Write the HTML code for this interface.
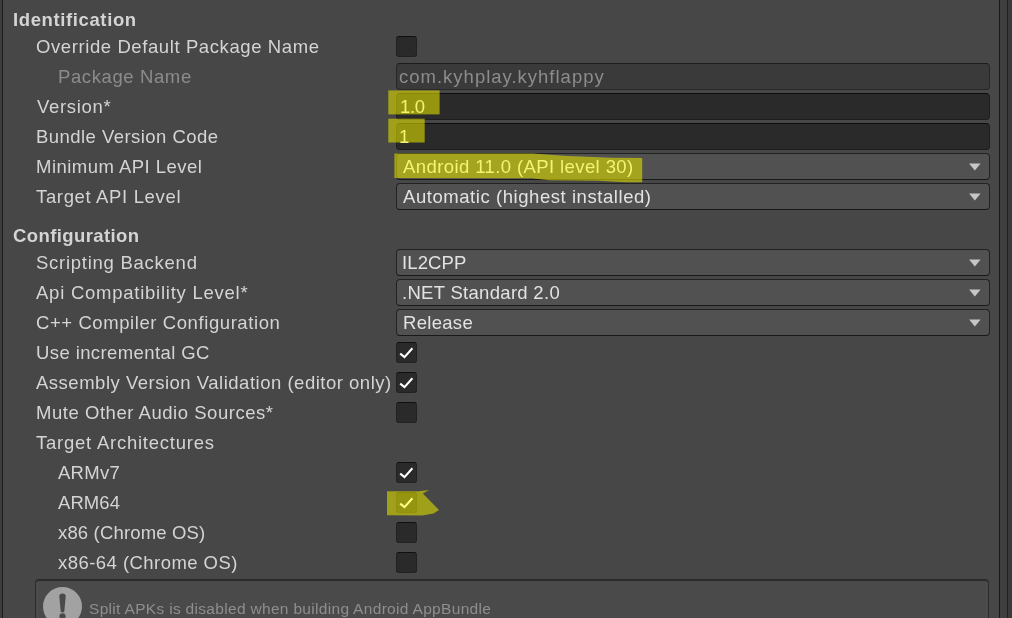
<!DOCTYPE html><html><head><meta charset="utf-8"><title>Player Settings</title><style>
html,body{margin:0;padding:0;}
body{width:1012px;height:618px;overflow:hidden;background:#474747;position:relative;font-family:"Liberation Sans",sans-serif;font-size:18.5px;color:#d4d4d4;}
.t{position:absolute;white-space:nowrap;line-height:30px;height:30px;z-index:3;will-change:transform;}
.b{font-weight:bold;}
.d{color:#8c8c8c;}
.y{color:#f3f374;}
.w{color:#e2e2e2;}
.edgeL{position:absolute;left:0;top:0;width:1.6px;height:618px;background:#3c3c3c;}
.lineL{position:absolute;left:1.5px;top:0;width:1.5px;height:618px;background:#1c1c1c;}
.lineR{position:absolute;left:999.2px;top:0;width:1.1px;height:618px;background:#1a1a1a;}
.sb{position:absolute;left:1000.3px;top:0;width:7px;height:618px;background:#3f3f3f;}
.lineR2{position:absolute;left:1007.3px;top:0;width:1.1px;height:618px;background:#202020;}
.edgeR{position:absolute;left:1008.3px;top:0;width:4px;height:618px;background:#3a3a3a;}
.tf{position:absolute;left:396px;width:594px;height:27px;box-sizing:border-box;border-radius:4px;background:#2a2a2a;border:1.5px solid #1e1e1e;border-top-color:#0c0c0c;z-index:1;}
.tf.dis{background:#3a3a3a;border-color:#272727;border-top-color:#1c1c1c;}
.dd{position:absolute;left:396px;width:594px;height:27px;box-sizing:border-box;border-radius:4px;background:#515151;border:1.4px solid #222;border-bottom-color:#191919;z-index:1;}
.cb{position:absolute;left:396px;width:21px;height:21px;box-sizing:border-box;border-radius:3px;background:#2a2a2a;border:1.5px solid #212121;border-top-color:#0f0f0f;z-index:1;}
.hl{position:absolute;left:0;top:0;z-index:2;}
.ck{position:absolute;z-index:3;left:396px;width:21px;height:21px;}
.help{position:absolute;left:34.5px;top:579px;width:954.5px;height:60px;box-sizing:border-box;border:1.4px solid #2b2b2b;border-top-width:2px;border-radius:4px;background:#4a4a4a;z-index:1;}
.ht{position:absolute;white-space:nowrap;font-size:15.5px;color:#8e8e8e;line-height:20px;z-index:3;will-change:transform;}
</style></head><body>
<div class="edgeL"></div><div class="lineL"></div><div class="lineR"></div><div class="sb"></div><div class="lineR2"></div><div class="edgeR"></div>
<div class="tf dis" style="top:63px"></div>
<div class="tf" style="top:93px"></div>
<div class="tf" style="top:123px"></div>
<div class="dd" style="top:153px"></div>
<div class="dd" style="top:183px"></div>
<div class="dd" style="top:249px"></div>
<div class="dd" style="top:279px"></div>
<div class="dd" style="top:309px"></div>
<div class="cb" style="top:36px"></div>
<div class="cb" style="top:342px"></div>
<svg class="ck" style="top:342px" viewBox="0 0 21 21"><path d="M4.2 11.6 L8.5 15.1 L16.4 6.3" fill="none" stroke="#ffffff" stroke-width="2.1" stroke-linecap="butt" stroke-linejoin="miter"/></svg>
<div class="cb" style="top:372px"></div>
<svg class="ck" style="top:372px" viewBox="0 0 21 21"><path d="M4.2 11.6 L8.5 15.1 L16.4 6.3" fill="none" stroke="#ffffff" stroke-width="2.1" stroke-linecap="butt" stroke-linejoin="miter"/></svg>
<div class="cb" style="top:402px"></div>
<div class="cb" style="top:462px"></div>
<svg class="ck" style="top:462px" viewBox="0 0 21 21"><path d="M4.2 11.6 L8.5 15.1 L16.4 6.3" fill="none" stroke="#ffffff" stroke-width="2.1" stroke-linecap="butt" stroke-linejoin="miter"/></svg>
<div class="cb" style="top:492px"></div>
<svg class="ck" style="top:492px" viewBox="0 0 21 21"><path d="M4.2 11.6 L8.5 15.1 L16.4 6.3" fill="none" stroke="#ffff84" stroke-width="2.1" stroke-linecap="butt" stroke-linejoin="miter"/></svg>
<div class="cb" style="top:522px"></div>
<div class="cb" style="top:552px"></div>
<svg class="hl" width="1012" height="618" viewBox="0 0 1012 618"><rect x="388.3" y="90.4" width="51.3" height="24" fill="rgba(215,215,0,0.62)"/><rect x="388.3" y="118.7" width="36.4" height="23.8" fill="rgba(215,215,0,0.62)"/><polygon points="394.4,153.6 533,153.5 563,155.8 612,157.7 642.2,158.1 642.2,182.3 625.7,182.3 598,180.7 549.6,180.3 531.6,178.2 394.4,177.9" fill="rgba(215,215,0,0.62)"/><polygon points="387,491.3 418.5,491.3 429.2,490 422.8,493.4 439,510 433.5,513.6 422.4,515.6 387,515.3" fill="rgba(215,215,0,0.62)"/></svg>
<svg class="hl" style="z-index:3" width="1012" height="618" viewBox="0 0 1012 618"><polygon points="969.1,163.6 980.6,163.6 974.85,170.5" fill="#c6c6c6"/><polygon points="969.1,193.6 980.6,193.6 974.85,200.5" fill="#c6c6c6"/><polygon points="969.1,259.6 980.6,259.6 974.85,266.5" fill="#c6c6c6"/><polygon points="969.1,289.6 980.6,289.6 974.85,296.5" fill="#c6c6c6"/><polygon points="969.1,319.6 980.6,319.6 974.85,326.5" fill="#c6c6c6"/></svg>
<div class="help"></div>
<svg style="position:absolute;left:43px;top:586.5px;z-index:3" width="40" height="40" viewBox="0 0 40 40"><circle cx="19.5" cy="19.5" r="19.5" fill="#a2a2a2"/><path d="M16.3 9.6 Q16.3 6.6 19.5 6.6 Q22.7 6.6 22.7 9.6 L21.2 25.2 L17.8 25.2 Z" fill="#4a4a4a"/><circle cx="19.5" cy="29.3" r="3.1" fill="#4a4a4a"/></svg>
<span class="ht" style="left:89px;top:598.6px;letter-spacing:0.315px">Split APKs is disabled when building Android AppBundle</span>
<span class="t b" style="left:13.0px;top:5px;letter-spacing:0.615px">Identification</span>
<span class="t" style="left:36.0px;top:32px;letter-spacing:0.593px">Override Default Package Name</span>
<span class="t d" style="left:58.0px;top:62px;letter-spacing:0.609px">Package Name</span>
<span class="t" style="left:36.5px;top:92px;letter-spacing:0.671px">Version*</span>
<span class="t" style="left:36.0px;top:122px;letter-spacing:0.456px">Bundle Version Code</span>
<span class="t" style="left:36.0px;top:152px;letter-spacing:0.469px">Minimum API Level</span>
<span class="t" style="left:36.0px;top:182px;letter-spacing:0.653px">Target API Level</span>
<span class="t b" style="left:13.0px;top:221px;letter-spacing:0.4px">Configuration</span>
<span class="t" style="left:36.0px;top:248px;letter-spacing:0.738px">Scripting Backend</span>
<span class="t" style="left:36.0px;top:278px;letter-spacing:0.752px">Api Compatibility Level*</span>
<span class="t" style="left:36.0px;top:308px;letter-spacing:0.58px">C++ Compiler Configuration</span>
<span class="t" style="left:36.0px;top:338px;letter-spacing:0.406px">Use incremental GC</span>
<span class="t" style="left:36.0px;top:368px;letter-spacing:0.508px">Assembly Version Validation (editor only)</span>
<span class="t" style="left:36.0px;top:398px;letter-spacing:0.537px">Mute Other Audio Sources*</span>
<span class="t" style="left:36.0px;top:428px;letter-spacing:0.763px">Target Architectures</span>
<span class="t" style="left:58.0px;top:458px;letter-spacing:0.275px">ARMv7</span>
<span class="t" style="left:58.0px;top:488px;letter-spacing:0.075px">ARM64</span>
<span class="t" style="left:58.0px;top:518px;letter-spacing:0.157px">x86 (Chrome OS)</span>
<span class="t" style="left:58.0px;top:548px;letter-spacing:0.453px">x86-64 (Chrome OS)</span>
<span class="t d" style="left:399.0px;top:62px;letter-spacing:1.0px">com.kyhplay.kyhflappy</span>
<span class="t y" style="left:400.0px;top:92px;letter-spacing:-0.35px">1.0</span>
<span class="t y" style="left:398.5px;top:122px;letter-spacing:0px">1</span>
<span class="t y" style="left:402.5px;top:152px;letter-spacing:0.404px">Android 11.0 (API level 30)</span>
<span class="t w" style="left:402.5px;top:182px;letter-spacing:0.557px">Automatic (highest installed)</span>
<span class="t w" style="left:401.5px;top:248px;letter-spacing:0.12px">IL2CPP</span>
<span class="t w" style="left:402.0px;top:278px;letter-spacing:0.3px">.NET Standard 2.0</span>
<span class="t w" style="left:402.5px;top:308px;letter-spacing:0.3px">Release</span>
</body></html>
